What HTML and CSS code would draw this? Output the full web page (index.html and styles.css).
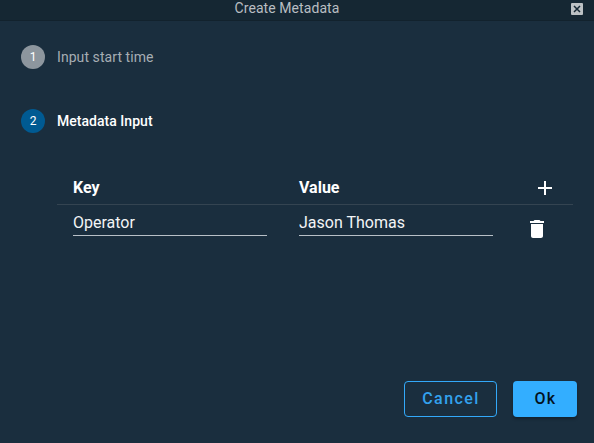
FILE: index.html
```html
<!DOCTYPE html>
<html lang="en">
<head>
<meta charset="utf-8">
<title>Create Metadata</title>
<link rel="stylesheet" href="styles.css">
</head>
<body>
<section class="dialog">
  <header class="titlebar">
    <h1 class="title">Create Metadata</h1>
    <button class="close" aria-label="Close">
      <svg width="12" height="12" viewBox="0 0 12 12"><path d="M3 3l6 6M9 3l-6 6"/></svg>
    </button>
  </header>
  <main class="content">
    <div class="step"><span class="badge">1</span><span class="label">Input start time</span></div>
    <div class="step active"><span class="badge">2</span><span class="label">Metadata Input</span></div>
    <div class="table">
      <div class="row head">
        <span class="key">Key</span>
        <span class="value">Value</span>
        <button class="icon" aria-label="Add"><svg width="24" height="24" viewBox="0 0 24 24"><path d="M19 13h-6v6h-2v-6H5v-2h6V5h2v6h6z"/></svg></button>
      </div>
      <div class="row">
        <input class="field" value="Operator" aria-label="Key">
        <input class="field" value="Jason Thomas" aria-label="Value">
        <button class="icon" aria-label="Delete"><svg width="24" height="24" viewBox="0 0 24 24"><path d="M6 19c0 1.100.900 2 2 2h8c1.100 0 2-.900 2-2V7H6v12zM19 4h-3.500l-1-1h-5l-1 1H5v2h14V4z"/></svg></button>
      </div>
    </div>
  </main>
  <footer class="actions">
    <button class="button cancel">Cancel</button>
    <button class="button ok">Ok</button>
  </footer>
</section>
</body>
</html>
```

FILE: styles.css
```css
* { box-sizing: border-box; }
body { margin: 0; background: #1a2e3e; font-family: Roboto, sans-serif; color: #fff; }
button { font: inherit; border: 0; padding: 0; background: none; color: inherit; }
svg { display: block; fill: currentColor; }
.dialog { height: 443px; display: flex; flex-direction: column; overflow: hidden; }
.titlebar { height: 21px; flex: none; display: grid; grid-template-columns: 1fr 20px; background: #152733; border-bottom: 1px solid #12222d; color: #b9bec2; }
.title { margin: 0; font-size: 14px; font-weight: 400; line-height: 17px; letter-spacing: .07px; text-align: center; }
.close { width: 12px; height: 12px; margin: 3px 0 0 -3px; border-radius: 1px; background: #bcc1c4; color: #152733; }
.close svg { stroke: currentColor; stroke-width: 1.5; fill: none; }
.content { flex: 1; padding: 24px 21px 0; }
.step { display: flex; align-items: center; height: 24px; gap: 12px; margin-bottom: 40px; font-size: 14px; letter-spacing: .07px; color: #a6adb3; }
.badge { width: 24px; height: 24px; border-radius: 50%; background: #8d969e; color: #fff; font-size: 12px; line-height: 24px; letter-spacing: 0; text-align: center; }
.step.active { color: #fff; font-weight: 500; margin-bottom: 39px; letter-spacing: .03px; }
.active .badge { background: #005a92; font-weight: 400; }
.table { margin-left: 36px; }
.row { display: grid; grid-template-columns: 194px 194px 24px; column-gap: 32px; padding-left: 16px; }
.head { height: 33px; align-items: center; border-bottom: 1px solid #344451; font-size: 16px; font-weight: 700; }
.head span { padding-bottom: 2px; }
.head .icon { margin-left: 8px; }
.field { width: 194px; height: 31px; padding: 8px 0 3px; border: 0; border-bottom: 1px solid #b8c0c7; border-radius: 0; background: none; color: #f3f5f6; font: 400 16px/19px Roboto, sans-serif; outline: none; }
.row:not(.head) .icon { margin-top: 12px; }
.actions { display: flex; justify-content: flex-end; gap: 16px; padding: 0 17px 26px; }
.button { height: 36px; padding: 0 0 1px 1px; border-radius: 4px; font-size: 16px; font-weight: 500; letter-spacing: 1.43px; }
.cancel { width: 93px; border: 1px solid #33a9f9; color: #33a2ee; }
.ok { width: 64px; background: #33aeff; color: #03131f; box-shadow: 0 2px 3px rgba(0, 0, 0, .3); }
```
